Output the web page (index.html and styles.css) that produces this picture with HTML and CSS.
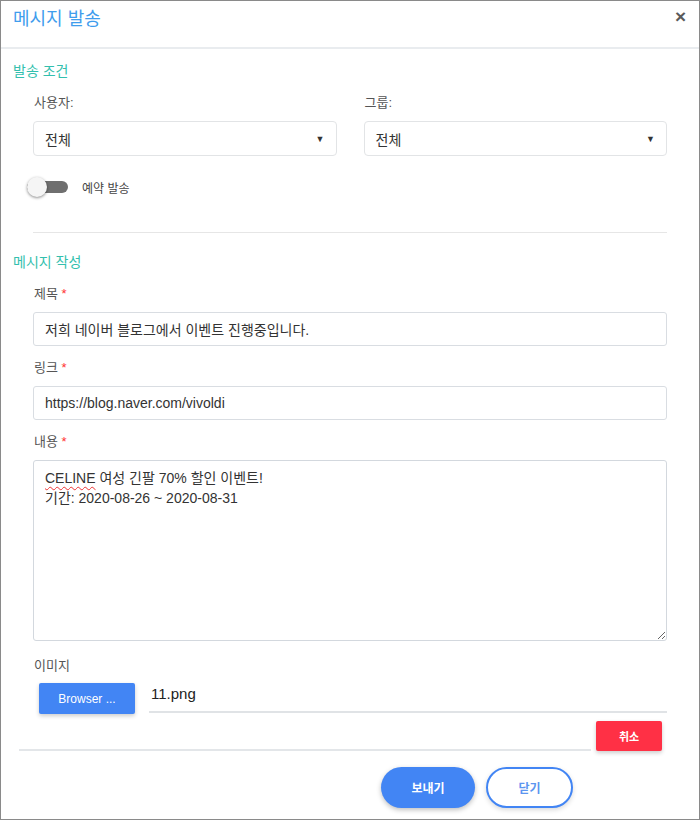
FILE: index.html
```html
<!DOCTYPE html>
<html lang="ko">
<head>
    <meta charset="UTF-8">
    <meta name="viewport" content="width=device-width, initial-scale=1.0">
    <title>메시지 발송</title>
    <link rel="stylesheet" href="styles.css">
</head>
<body>
    <div class="modal">
        <div class="modal-header">
            <h1 class="modal-title">메시지 발송</h1>
            <span class="close">&times;</span>
        </div>

        <div class="modal-body">
            <h2 class="section-title">발송 조건</h2>
            <div class="row">
                <div class="col">
                    <label class="field-label">사용자:</label>
                    <div class="select">
                        <span>전체</span>
                        <span class="caret">&#9660;</span>
                    </div>
                </div>
                <div class="col">
                    <label class="field-label">그룹:</label>
                    <div class="select">
                        <span>전체</span>
                        <span class="caret">&#9660;</span>
                    </div>
                </div>
            </div>

            <div class="switch-row">
                <span class="switch"><span class="knob"></span></span>
                <span class="switch-label">예약 발송</span>
            </div>

            <hr class="divider">

            <h2 class="section-title">메시지 작성</h2>

            <label class="field-label">제목 <span class="req">*</span></label>
            <div class="input">저희 네이버 블로그에서 이벤트 진행중입니다.</div>

            <label class="field-label">링크 <span class="req">*</span></label>
            <div class="input">https://blog.naver.com/vivoldi</div>

            <label class="field-label">내용 <span class="req">*</span></label>
            <div class="textarea"><span class="typo">CELINE</span> 여성 긴팔 70% 할인 이벤트!<br>기간: 2020-08-26 ~ 2020-08-31</div>

            <label class="field-label image-label">이미지</label>
            <div class="file-row">
                <button class="btn-browse">Browser ...</button>
                <div class="file-name">11.png</div>
            </div>
        </div>

        <div class="cancel-row">
            <div class="cancel-line"></div>
            <button class="btn-cancel">취소</button>
        </div>

        <div class="modal-footer">
            <button class="btn-send">보내기</button>
            <button class="btn-close">닫기</button>
        </div>
    </div>
</body>
</html>
```

FILE: styles.css
```css
* {
    box-sizing: border-box;
}

body {
    margin: 0;
    font-family: "Liberation Sans", "Noto Sans CJK KR", sans-serif;
    background-color: #fff;
}

.modal {
    width: 700px;
    height: 820px;
    border: 1px solid #8a8a8a;
    background-color: #fff;
}

.modal-header {
    height: 48px;
    display: flex;
    justify-content: space-between;
    align-items: flex-start;
    padding: 5px 13px 0 12px;
    border-bottom: 2px solid #e9ecef;
}

.modal-title {
    margin: 0;
    font-size: 18px;
    font-weight: normal;
    line-height: 26px;
    color: #3f9ded;
}

.close {
    font-size: 19px;
    font-weight: bold;
    line-height: 22px;
    color: #5a5a5a;
    cursor: pointer;
}

.modal-body {
    padding: 12px 32px 0 32px;
}

.section-title {
    margin: 0 0 0 -20px;
    font-size: 14px;
    font-weight: normal;
    line-height: 20px;
    color: #33bfae;
}

.row {
    display: flex;
    gap: 27px;
    margin-top: 14px;
}

.col {
    flex: 1;
}

.row .field-label {
    margin-top: 0;
}

.field-label {
    display: block;
    margin: 14px 0 10px 1px;
    font-size: 13px;
    line-height: 16px;
    color: #555;
}

.image-label {
    margin: 17px 0 9px 1px;
}

.req {
    color: #f33;
}

.select {
    height: 35px;
    display: flex;
    justify-content: space-between;
    align-items: center;
    padding: 0 11px 0 11px;
    border: 1px solid #e2e4e6;
    border-radius: 4px;
    font-size: 14px;
    color: #333;
}

.caret {
    font-size: 9px;
    color: #333;
}

.switch-row {
    display: flex;
    align-items: center;
    margin: 21px 0 0 -6px;
    height: 20px;
}

.switch {
    position: relative;
    width: 41px;
    height: 12px;
    margin-right: 14px;
    border-radius: 6px;
    background-color: #6f6f6f;
}

.knob {
    position: absolute;
    left: 0;
    top: -4px;
    width: 20px;
    height: 20px;
    border-radius: 50%;
    background-color: #f5f5f5;
    box-shadow: 0 1px 3px rgba(0, 0, 0, 0.45);
}

.switch-label {
    font-size: 12px;
    color: #444;
}

.divider {
    margin: 35px 0 19px 0;
    border: none;
    border-top: 1px solid #e6e6e6;
}

.input {
    height: 34px;
    padding: 0 11px;
    display: flex;
    align-items: center;
    border: 1px solid #d9dde2;
    border-radius: 3px;
    font-size: 14px;
    color: #333;
}

.textarea {
    height: 181px;
    padding: 7px 11px;
    border: 1px solid #d3d8de;
    border-radius: 3px;
    font-size: 14px;
    line-height: 20px;
    color: #333;
    overflow: auto;
    resize: vertical;
}

.typo {
    text-decoration: underline wavy #e33;
    text-decoration-thickness: 1px;
    text-underline-offset: 3px;
}

.file-row {
    display: flex;
    align-items: flex-start;
}

.btn-browse {
    width: 96px;
    height: 31px;
    margin: 0 14px 0 6px;
    border: none;
    border-radius: 2px;
    background-color: #4285f4;
    color: #fff;
    font-family: inherit;
    font-size: 12px;
    box-shadow: 0 2px 4px rgba(0, 0, 0, 0.2);
}

.file-name {
    flex: 1;
    height: 30px;
    padding: 1px 0 0 2px;
    border-bottom: 2px solid #e0e3e6;
    font-size: 15px;
    line-height: 20px;
    color: #222;
}

.cancel-row {
    display: flex;
    align-items: flex-end;
    padding: 7px 37px 0 18px;
}

.cancel-line {
    flex: 1;
    border-bottom: 2px solid #e3e6e9;
    margin-right: 5px;
}

.btn-cancel {
    width: 66px;
    height: 30px;
    border: none;
    border-radius: 2px;
    background-color: #ff3045;
    color: #fff;
    font-family: inherit;
    font-size: 11px;
    font-weight: bold;
    box-shadow: 0 2px 4px rgba(0, 0, 0, 0.2);
}

.modal-footer {
    display: flex;
    justify-content: flex-end;
    gap: 11px;
    padding: 16px 126px 0 0;
}

.btn-send,
.btn-close {
    height: 41px;
    border-radius: 21px;
    font-family: inherit;
    font-size: 12px;
    font-weight: bold;
    cursor: pointer;
}

.btn-send {
    width: 94px;
    border: none;
    background-color: #4285f4;
    color: #fff;
    box-shadow: 0 2px 5px rgba(0, 0, 0, 0.25);
}

.btn-close {
    width: 87px;
    border: 2px solid #4285f4;
    background-color: #fff;
    color: #5c95f0;
    box-shadow: 0 2px 5px rgba(0, 0, 0, 0.15);
}
```
